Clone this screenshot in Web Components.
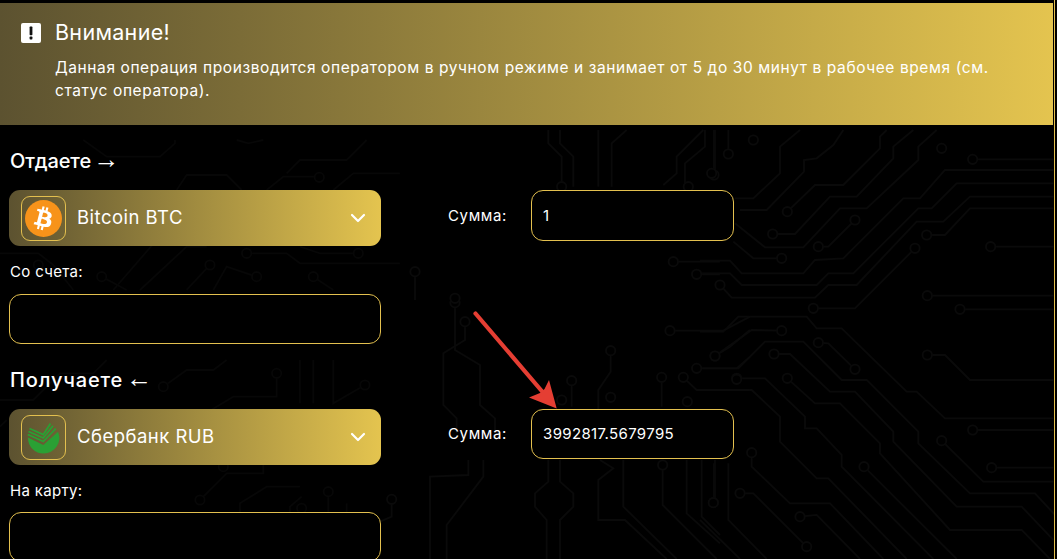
<!DOCTYPE html>
<html lang="ru"><head><meta charset="utf-8"><title>Обмен</title>
<style>
html,body{margin:0;height:100%;background:#000;overflow:hidden}
body{font-family:Inter,"Noto Sans",sans-serif;color:#fff}
</style></head><body>
<exchange-page>
  <alert-banner title-text="Внимание!">Данная операция производится оператором в ручном режиме и занимает от 5 до 30 минут в рабочее время (см.<br>статус оператора).</alert-banner>
  <exchange-section heading="Отдаете" arrow="→" track="-.1">
    <currency-select slot="select" name="Bitcoin BTC" icon="btc"></currency-select>
    <sum-field slot="sum" value="1" h="51"></sum-field>
    <text-field slot="account" label="Со счета:" gap="12"></text-field>
  </exchange-section>
  <exchange-section heading="Получаете" arrow="←" track=".85">
    <currency-select slot="select" name="Сбербанк RUB" icon="sber"></currency-select>
    <sum-field slot="sum" value="3992817.5679795" h="50"></sum-field>
    <text-field slot="account" label="На карту:" gap="11"></text-field>
  </exchange-section>
</exchange-page>
<script>
const def=(n,html,init)=>customElements.define(n,class extends HTMLElement{
  connectedCallback(){ if(this.shadowRoot)return; const s=this.attachShadow({mode:'open'}); s.innerHTML=typeof html==='function'?html(this):html; init&&init(s,this);}
});
const GOLD='#e3c04f';
const GRAD='linear-gradient(90deg,#5c5230 0%,#e4c44f 100%)';

const layers=[
 [700,130,[
  "300,0 240,50 240,130 160,205 105,205","430,0 400,45 350,85 312,90 312,125 200,240 120,240",
  "262,245 345,165 430,165 540,55 540,20 560,0","218,312 285,312 390,200 470,200 580,85 580,50 640,0",
  "105,280 195,352 310,352 420,235 500,235 655,90 655,50 710,0","100,335 160,385 245,385","355,350 385,350 465,270",
  "0,392 90,392 125,430 310,430 345,390 430,385 610,205 660,205 735,120 1060,120",
  "0,430 90,430 125,465 350,465 385,430 460,430 655,235 695,235 770,160 1060,160",
  "60,465 95,503 345,503 385,465 470,465 650,275 730,275 810,200 1060,200",
  "340,535 465,535 645,355","680,315 735,315 810,235 1060,235","872,350 1060,350","818,88 1060,88","682,497 1060,497","780,538 1060,538",
  "0,605 70,605 115,560 320,560 350,595 425,595 620,785 650,785 735,865 1060,865","45,678 155,600 245,602",
  "0,715 115,715 195,635 310,635 425,750 500,750 655,905 655,940 810,1090 1005,1090 1070,1160","355,638 385,640 465,718",
  "222,672 270,672 390,785 465,785 580,905 580,935 770,1130 965,1130 1060,1230",
  "262,745 345,820 420,820 540,940 540,970 750,1200 965,1200 1050,1287",
  "0,780 155,780 240,860 240,935 350,1045 385,1045 620,1287","110,745 195,745 315,860 315,895 350,895 425,975 425,1010 700,1287",
  "818,900 1060,900","725,932 850,1055 1060,1055","875,1013 1060,1013","682,675 735,675 810,750 1060,750",
  "155,968 155,1010 270,1120 390,1120 550,1287","120,1090 160,1090 320,1250","300,1160 350,1155 480,1287","492,1010 770,1287",
  "42,0 42,135","85,0 85,72","42,1000 42,1118","85,1000 85,1170 200,1287","0,1170 120,1287"
 ],["160,30","85,72","42,135","725,55","818,88","262,245","218,312","465,270","355,350","245,385","680,315","645,355","872,350","60,465","340,535","682,497","780,538","245,602","45,678","355,638","222,672","465,718","110,745","262,745","682,675","818,900","725,932","875,1013","155,968","120,1090","40,1118","492,1010","300,1160","320,1250"]],
 [380,460,[
  "265,0 265,45 150,50 150,297","310,0 310,50 200,195 200,297","505,0 505,65 465,100 465,140 500,180 500,297",
  "540,0 540,65 580,100 580,140 540,180 540,297","660,0 700,25 655,60 655,180 735,180 860,297","730,0 730,140 890,297",
  "848,15 848,135 1010,297","920,0 920,160 1020,250","965,0 965,170 1020,225","1005,0 1005,120","35,118 35,170 0,185"
 ],["848,15","1000,128","35,118"]],
 [430,290,[
  "75,38 75,180 150,225 150,345 195,385 195,430","105,95 105,150 40,190 40,345 80,385 80,430",
  "542,182 542,245 505,300 505,360","425,272 425,350","695,262 695,350","760,262 800,300 960,300",
  "720,122 880,122 960,80","855,198 900,170 960,120","800,235 920,235 960,200"
 ],["75,38","105,95","542,182","425,272","542,322","695,262","760,262","720,122","855,198","800,235","920,268","772,335","395,330"]],
 [380,130,[
  "505,0 505,40 545,80 545,170","540,0 540,40 580,80 580,170","655,0 655,170","740,0 695,40 695,170",
  "970,0 890,80 890,130 850,165","975,0 975,50 915,100 915,160","1005,0 1005,120","105,425 105,510",
  "880,395 1020,395","950,433 1020,433"
 ],["545,170","925,170","995,130","105,425","880,395","950,433","225,505"]],
 [0,140,[
  "250,0 320,50 480,50 525,10 525,0","340,450 470,300 530,240","530,150 560,105 680,105 725,150","800,150 850,110 945,110",
  "710,0 745,10 790,0","740,340 860,340 900,370 1200,370","1075,340 960,340 900,320","630,375 560,450","770,410 680,380 640,450",
  "940,410 1000,450","305,410 380,450","0,340 115,340 160,375 220,450","420,450 560,320 620,320","1000,150 1060,100 1200,100","1100,0 1040,60 900,60 860,100"
 ],["958,112","740,340","1075,340","630,375","770,410","940,410","305,410","115,375"]],
 [0,360,[
  "0,120 100,120 180,40 280,40 320,0","490,80 560,30 640,30 680,0","830,40 830,110 700,110 600,170 480,170","900,0 900,130","940,0 940,130","1000,0 1000,130 1095,75",
  "0,200 20,180","600,420 680,340 790,340 790,297","720,597 720,430 800,380 900,380","985,395 985,597","1040,597 1040,430","870,597 870,440 905,410","960,597 960,470"
 ],["490,80","830,40","1095,75","670,320","600,420","985,395","905,445"]]
];
const ns=layers.map(([dx,dy,ps,cs],i)=>`<g opacity="${i>3?.7:1}" transform="translate(${dx} ${dy}) scale(.3333)">`+
  ps.map(p=>`<polyline points="${p}"/>`).join('')+
  cs.map(c=>{const[a,b]=c.split(',');return `<circle cx="${a}" cy="${b}" r="14"/>`}).join('')+'</g>').join('');

def('circuit-bg',`<style>:host{display:block;position:absolute;inset:0;z-index:0}svg{display:block}
 polyline,circle{fill:none;stroke:#0a0a0a;stroke-width:5.5}circle{fill:#000}</style>
 <svg width="1057" height="559" viewBox="0 0 1057 559" aria-hidden="true">${ns}</svg>`);

def('exchange-page',`<style>
 :host{display:block;position:relative;width:1055px;height:559px;box-sizing:border-box;padding:3px 1px 0 0;border-right:1px solid ${GOLD};overflow:hidden;background:#000}
 .front{position:relative;z-index:1}
 svg{position:absolute;left:0;top:0;z-index:2;pointer-events:none}
 </style><circuit-bg></circuit-bg><div class="front"><slot></slot></div>
 <svg width="1054" height="559" aria-hidden="true">
  <line x1="475.500" y1="313.500" x2="546" y2="396" stroke="#e53e33" stroke-width="4.200" stroke-linecap="round"/>
  <path d="M556.700 408.500L529 397.500 540 393 544.500 389 549 380Z" fill="#e53e33"/>
 </svg>`);

def('alert-banner',h=>`<style>
 :host{display:block;box-sizing:border-box;height:122px;background:${GRAD};padding:16px 55px 0 21px;color:#fff;position:relative}
 .wrap{display:flex;gap:14px}
 svg{flex:none;margin-top:4px}
 h2{margin:0;font:400 21.500px/27px Inter,"Noto Sans",sans-serif;letter-spacing:.3px}
 p{margin:10px 0 0;font:400 15.500px/23px Inter,"Noto Sans",sans-serif;letter-spacing:.59px;white-space:nowrap}
 </style><div class="wrap">
 <svg width="20" height="20" viewBox="0 0 20 20" aria-hidden="true"><rect width="20" height="20" rx="2" fill="#fff"/><rect x="8.600" y="3.600" width="2.800" height="8.600" rx=".6" fill="#111"/><rect x="8.600" y="13.600" width="2.800" height="2.800" rx=".6" fill="#111"/></svg>
 <div><h2>${h.getAttribute('title-text')}</h2><p><slot></slot></p></div></div>`);

def('exchange-section',h=>`<style>
 :host{display:block;padding:20px 0 0 9px}
 h3{margin:0 0 13px 1px;font:500 20px/32px Inter,"Noto Sans",sans-serif;letter-spacing:${h.getAttribute('track')}px;color:#fff;white-space:nowrap}
 h3 span{font:400 26px/0 "Liberation Sans",sans-serif;letter-spacing:0;margin-left:-3px}
 .row{display:flex;align-items:flex-start}
 .left{display:flex;flex-direction:column;flex:none;width:372px}
 .sum{flex:none;margin-left:67px}
 </style><h3>${h.getAttribute('heading')} <span>${h.getAttribute('arrow')}</span></h3>
 <div class="row"><div class="left"><slot name="select"></slot><slot name="account"></slot></div><div class="sum"><slot name="sum"></slot></div></div>`);

const icons={
 btc:`<svg width="37" height="37" viewBox="0 0 64 64" aria-hidden="true"><circle cx="32" cy="32" r="32" fill="#f7931a"/><path fill="#fff" d="M46.1 27.4c.6-4.3-2.6-6.6-7.1-8.1l1.5-5.9-3.6-.9-1.4 5.7c-.9-.2-1.9-.5-2.9-.7l1.4-5.8-3.6-.9-1.5 5.9c-.8-.2-1.5-.3-2.2-.5l-5-1.2-1 3.8s2.7.6 2.6.6c1.5.4 1.7 1.3 1.7 2.1l-1.7 6.7c.1 0 .2.1.4.1l-.4-.1-2.4 9.4c-.2.4-.6 1.1-1.7.8 0 .1-2.6-.7-2.6-.7l-1.8 4.1 4.7 1.2c.9.2 1.7.4 2.6.7l-1.5 6 3.6.9 1.5-5.9c1 .3 1.9.5 2.9.8l-1.5 5.9 3.6.9 1.5-6c6.2 1.2 10.8.7 12.8-4.9 1.6-4.5-.1-7.1-3.3-8.8 2.3-.6 4.1-2.1 4.6-5.3zm-8.2 11.6c-1.1 4.5-8.7 2.1-11.2 1.4l2-8c2.5.6 10.4 1.8 9.2 6.6zm1.1-11.7c-1 4.1-7.4 2-9.4 1.5l1.8-7.2c2.1.5 8.7 1.500 7.6 5.700z"/></svg>`,
 sber:`<svg width="37" height="37" viewBox="0 0 37 37" aria-hidden="true">
  <path fill="#2aa034" d="M3 18.500L18.300 26 33 12.800A15.500 15.500 0 0 1 18.500 34.500 15.500 15.500 0 0 1 3 19Z"/>
  <g fill="none" stroke="#2aa034" stroke-width="1.800"><polyline points="4.500,9.500 18.300,15.500 25.500,4.500"/><polyline points="3.500,12.500 18.300,19 28,6.800"/><polyline points="2.800,15.500 18.300,22.500 30.800,9.500"/></g></svg>`
};
def('currency-select',h=>`<style>
 :host{display:flex;align-items:center;box-sizing:border-box;height:56px;border-radius:11px;background:${GRAD};padding:0 15px 0 12px;color:#fff}
 .ic{flex:none;width:45px;height:45px;box-sizing:border-box;border:1px solid ${GOLD};border-radius:9px;display:flex;align-items:center;justify-content:center}
 .n{flex:1;margin:-2px 0 0 11px;font:400 18.500px/24px Inter,"Noto Sans",sans-serif;letter-spacing:.48px}
 svg.c{flex:none}
 </style><div class="ic">${icons[h.getAttribute('icon')]}</div><div class="n">${h.getAttribute('name')}</div>
 <svg class="c" width="16" height="10" viewBox="0 0 16 10" aria-hidden="true"><polyline points="2,2 8,8 14,2" fill="none" stroke="#fff" stroke-width="2.200" stroke-linecap="round" stroke-linejoin="round"/></svg>`);

def('gold-input',h=>`<style>
 :host{display:flex;align-items:center;box-sizing:border-box;border:1px solid ${GOLD};border-radius:12px;padding:0 11px;background:#000;font:400 15px/20px Inter,"Noto Sans",sans-serif;letter-spacing:.36px;color:#fff}
 </style><slot></slot>`);

def('text-field',h=>`<style>
 :host{display:block;padding-top:16px}
 label{display:block;font:400 15px/20px Inter,"Noto Sans",sans-serif;letter-spacing:.33px;margin:0 0 ${h.getAttribute('gap')}px 1px}
 gold-input{height:50px}
 </style><label>${h.getAttribute('label')}</label><gold-input></gold-input>`);

def('sum-field',h=>`<style>
 :host{display:flex;align-items:center;height:${h.getAttribute('h')}px;width:286px}
 span{width:83px;flex:none;font:400 15px/20px Inter,"Noto Sans",sans-serif;letter-spacing:.63px}
 gold-input{flex:none;width:203px;height:100%}
 </style><span>Сумма:</span><gold-input>${h.getAttribute('value')}</gold-input>`);
</script>
</body></html>
